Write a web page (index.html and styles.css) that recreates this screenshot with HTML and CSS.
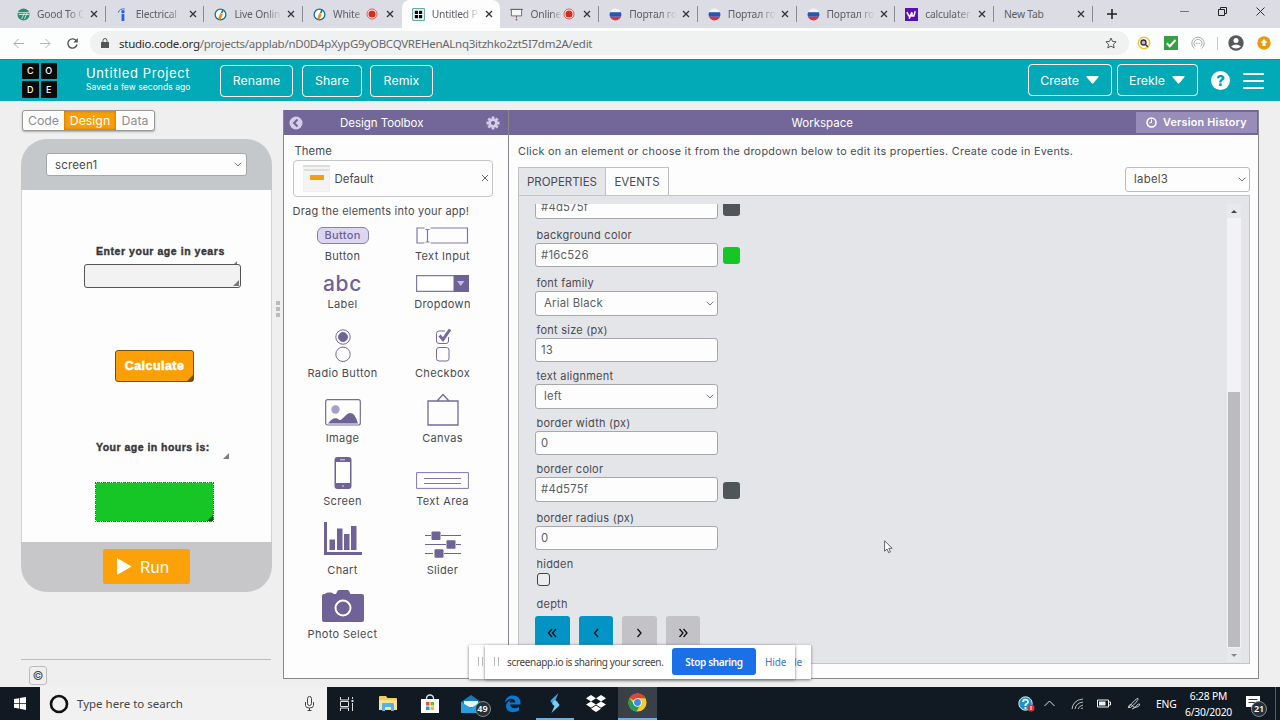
FILE: index.html
```
<!DOCTYPE html>
<html lang="en">
<head>
<meta charset="utf-8">
<title>Untitled Project - App Lab</title>
<link rel="stylesheet" href="styles.css">
</head>
<body>
<svg class="defs" width="0" height="0">
  <defs>
    <clipPath id="disc"><circle cx="7" cy="7" r="6.4"/></clipPath>
    <symbol id="flag" viewBox="0 0 14 14"><g clip-path="url(#disc)"><path fill="#f4f4fa" d="M0 0h14v4.500H0z"/><path fill="#2458b8" d="M0 4.500h14v5H0z"/><path fill="#df3045" d="M0 9.500h14V14H0z"/></g></symbol>
    <symbol id="live" viewBox="0 0 14 14"><circle cx="7" cy="7" r="5.800" fill="#fff" stroke="#147282" stroke-width="1.400"/><path d="M5 11.500 7 6l2 1-2.500 5z" fill="#ee8a1d" stroke="#ee8a1d"/><path d="m7.500 5 1.300-3 1.700.8L9 6z" fill="#147282"/></symbol>
    <symbol id="x" viewBox="0 0 8 8"><path d="m1 1 6 6M7 1 1 7" stroke="#333" stroke-width="1.300"/></symbol>
    <symbol id="rec" viewBox="0 0 12 12"><circle cx="6" cy="6" r="5" fill="#fff" stroke="#dc5247"/><circle cx="6" cy="6" r="3.600" fill="#d62b20"/></symbol>
    <symbol id="chev" viewBox="0 0 8 5"><path d="m.7.7 3.300 3.300L7.300.7" fill="none" stroke="#777"/></symbol>
    <symbol id="caret" viewBox="0 0 13 8"><path d="M1 0h11q1 0 .5 1L7.500 7q-1 1-2 0L.5 1Q0 0 1 0z" fill="#fff"/></symbol>
    <symbol id="corner" viewBox="0 0 6 6"><path d="M6 0v6H0z" fill="#000" fill-opacity=".5"/></symbol>
  </defs>
</svg>

<div class="tabs">
  <div class="tab"><svg class="fav" viewBox="0 0 14 14"><circle cx="7" cy="7" r="6.500" fill="#2d8b70"/><path d="M1 5h12M2 7h11M5 12l3-7M8 12l3-7" stroke="#cfe9df"/></svg><span class="tt">Good To C</span><svg class="cl"><use href="#x"/></svg></div>
  <div class="tab"><svg class="fav" viewBox="0 0 14 14"><circle cx="7.500" cy="4" r="1.900" fill="#2862d9"/><path d="M6 6.500h3V14H6z" fill="#2862d9"/><path d="M2.500 5Q4 0 9.500 1.200" fill="none" stroke="#2862d9"/></svg><span class="tt">Electrical</span><svg class="cl"><use href="#x"/></svg></div>
  <div class="tab"><svg class="fav"><use href="#live"/></svg><span class="tt">Live Onlin</span><svg class="cl"><use href="#x"/></svg></div>
  <div class="tab last"><svg class="fav"><use href="#live"/></svg><span class="tt short">White</span><svg class="rec"><use href="#rec"/></svg><svg class="cl"><use href="#x"/></svg></div>
  <div class="tab active"><svg class="fav" viewBox="0 0 14 14"><path d="M.7.700h12.600v12.600H.7z" fill="#fff" stroke="#3a9a8e"/><path d="M3 3h3.500v3.500H3zM7.500 3H11v3.500H7.500zM3 7.500h3.500V11H3zM7.500 7.500H11V11H7.500z"/></svg><span class="tt">Untitled P</span><svg class="cl"><use href="#x"/></svg></div>
  <div class="tab"><svg class="fav" viewBox="0 0 14 14"><path d="M1.500 1.500h11v7h-11zM0 1.500h14M7 8.500V11" fill="#f6f6f8" stroke="#666"/><circle cx="7" cy="12.500" r="1" fill="#d4375b"/></svg><span class="tt short">Online</span><svg class="rec"><use href="#rec"/></svg><svg class="cl"><use href="#x"/></svg></div>
  <div class="tab"><svg class="fav"><use href="#flag"/></svg><span class="tt">Портал го</span><svg class="cl"><use href="#x"/></svg></div>
  <div class="tab"><svg class="fav"><use href="#flag"/></svg><span class="tt">Портал го</span><svg class="cl"><use href="#x"/></svg></div>
  <div class="tab"><svg class="fav"><use href="#flag"/></svg><span class="tt">Портал го</span><svg class="cl"><use href="#x"/></svg></div>
  <div class="tab"><svg class="fav" viewBox="0 0 14 14"><path fill="#5a0fb8" d="M0 0h14v14H0z"/><path d="M2 4.500 4.500 9M7.500 4.500 4.500 11.500M7.500 5.500v3h2l1.500-5" stroke="#fff" stroke-width="1.700" fill="none"/></svg><span class="tt">calculater</span><svg class="cl"><use href="#x"/></svg></div>
  <div class="tab noicon"><span class="tt">New Tab</span><svg class="cl"><use href="#x"/></svg></div>
  <svg class="plus" viewBox="0 0 10 10"><path d="M5 0v10M0 5h10" stroke="#222" stroke-width="1.600"/></svg>
  <div class="winctl">
    <svg width="9" height="9"><path d="M0 4.500h9" stroke="#777"/></svg>
    <svg width="9" height="9" fill="none" stroke="#222"><path d="M.5 2.500h6v6h-6zM2.500 2.500v-2h6v6h-2"/></svg>
    <svg width="9" height="9"><path d="m.5.500 8 8M8.500.500l-8 8" stroke="#333"/></svg>
  </div>
</div>

<div class="toolbar">
  <svg class="nav" viewBox="0 0 11 11"><path d="M11 5.500H1M5.500 1 1 5.500 5.500 10" fill="none" stroke="#aaa"/></svg>
  <svg class="nav" viewBox="0 0 11 11"><path d="M0 5.500h10M5.500 1 10 5.500 5.500 10" fill="none" stroke="#b5b5b5"/></svg>
  <svg class="nav" viewBox="0 0 11 11"><path d="M9.500 3.200A4.600 4.600 0 1 0 10 6.500" fill="none" stroke="#555" stroke-width="1.400"/><path d="M10.800 0v4.500H6.300z" fill="#555"/></svg>
  <div class="omni">
    <svg width="8" height="10" viewBox="0 0 8 10"><path d="M0 4h8v6H0z" fill="#555"/><path d="M2 4V2.500a2 2 0 0 1 4 0V4" fill="none" stroke="#555"/></svg>
    <span class="url"><b>studio.code.org</b>/projects/applab/nD0D4pXypG9yOBCQVREHenALnq3itzhko2zt5I7dm2A/edit</span>
    <svg class="star" viewBox="0 0 12 12"><path d="m6 1 1.500 3.400 3.600.4-2.700 2.500.8 3.600L6 9.100 2.800 10.900l.8-3.600L.9 4.800l3.600-.4z" fill="none" stroke="#555"/></svg>
  </div>
  <div class="exts">
    <svg viewBox="0 0 14 14"><circle cx="7" cy="7" r="5.700" fill="#fff" stroke="#f2c53d" stroke-width="1.500"/><circle cx="6.500" cy="6.500" r="2.500" fill="#bbb" stroke="#333" stroke-width="1.300"/><path d="m8.300 8.300 2.500 2.500" stroke="#333" stroke-width="1.500"/></svg>
    <svg viewBox="0 0 14 14"><path d="M0 0h14v14H0z" fill="#35a043"/><path d="m2.800 7.200 3 3L11.500 4" fill="none" stroke="#fff" stroke-width="2"/></svg>
    <svg viewBox="0 0 14 14"><path d="M3.500 12.500a6.200 6.200 0 1 1 7 0M4.500 10.500a4 4 0 1 1 5 0" fill="none" stroke="#aaa"/><path d="M4.800 7.300h4.400" stroke="#999" stroke-dasharray="1 .7"/></svg>
    <i></i>
    <svg class="user" viewBox="0 0 16 16"><circle cx="8" cy="8" r="7.700" fill="#56595d"/><circle cx="8" cy="5.500" r="2.500" fill="#fff"/><path d="M3 11.500q5-4 10 0-5 4-10 0" fill="#fff"/></svg>
    <svg viewBox="0 0 14 14"><circle cx="7" cy="7" r="6.700" fill="#ea9a0c"/><path d="m7 3 3.500 3.700H8.500V10h-3V6.700h-2z" fill="#fff"/></svg>
  </div>
</div>

<header class="head">
  <div class="logo"><span>C</span><span>O</span><span>D</span><span>E</span></div>
  <div class="proj"><div class="pname">Untitled Project</div><div class="saved">Saved a few seconds ago</div></div>
  <div class="hb rename">Rename</div><div class="hb share">Share</div><div class="hb remix">Remix</div>
  <div class="hb create">Create <svg class="caret"><use href="#caret"/></svg></div>
  <div class="hb erekle">Erekle <svg class="caret"><use href="#caret"/></svg></div>
  <div class="help">?</div>
  <div class="burger"><i></i><i></i><i></i></div>
</header>

<main class="main">
  <section class="left">
    <div class="modes"><span>Code</span><span class="on">Design</span><span>Data</span></div>
    <div class="phone">
      <div class="ptop"><div class="psel"><span>screen1</span><svg class="chev"><use href="#chev"/></svg></div></div>
      <div class="screen">
        <div class="l1">Enter your age in years</div>
        <div class="inp"><svg class="c0"><use href="#corner"/></svg><svg class="c"><use href="#corner"/></svg></div>
        <div class="calc">Calculate<svg class="c"><use href="#corner"/></svg></div>
        <div class="l2"><span>Your age in hours is:</span><svg class="c"><use href="#corner"/></svg></div>
        <div class="green"><svg class="c"><use href="#corner"/></svg></div>
      </div>
      <div class="pbot"><div class="run"><svg width="16" height="18" viewBox="0 0 16 18"><path d="M0 0v18l15.500-9z" fill="#fff"/></svg><span>Run</span></div></div>
    </div>
    <div class="foot"><span>©</span></div>
  </section>
  <div class="grip"><i></i><i></i><i></i></div>

  <section class="work">
    <div class="box">
      <div class="bar">
        <svg width="14" height="14" viewBox="0 0 14 14"><circle cx="7" cy="7" r="6.500" fill="#d4cdea"/><path d="M8.500 3.500 5 7l3.500 3.500" fill="none" stroke="#6e6296" stroke-width="2"/></svg>
        <span class="t">Design Toolbox</span>
        <svg class="gear" width="14" height="14" viewBox="-7 -7 14 14"><g stroke="#d4cdea" stroke-width="2.800"><path d="M0-6.500v13M-6.500 0h13M-4.600-4.600l9.200 9.200M4.600-4.600l-9.200 9.200"/></g><circle r="4.600" fill="#d4cdea"/><circle r="2" fill="#6e6296"/></svg>
      </div>
      <div class="boxbody">
        <div class="theme">Theme</div>
        <div class="tsel"><div class="thumb"><i></i></div><span>Default</span><svg class="tx" viewBox="0 0 8 8"><path d="m1 1 6 6M7 1 1 7" stroke="#666"/></svg></div>
        <div class="drag">Drag the elements into your app!</div>
        <div class="tools">
          <div class="tool"><div class="bicon">Button</div><span>Button</span></div>
          <div class="tool"><svg width="53" height="17" fill="none" stroke="#8177aa" stroke-width="1.200"><path d="M8.500 1H1v15h7.500M14.500 1h37v15h-37M9.500 2.500h4M9.500 15h4M11.500 2.500V15"/></svg><span>Text Input</span></div>
          <div class="tool"><div class="abc">abc</div><span>Label</span></div>
          <div class="tool"><svg width="53" height="17"><path d="M.6.600h51.800v15.800H.6z" fill="#fff" stroke="#8177aa" stroke-width="1.200"/><path d="M37.500 0H53v17H37.500z" fill="#6e6296"/><path d="M41 6h7.500l-3.800 5z" fill="#c6badf"/></svg><span>Dropdown</span></div>
          <div class="tool r"><svg width="16" height="33" fill="none" stroke="#756a9d"><circle cx="8" cy="8" r="7.200"/><circle cx="8" cy="8" r="4.500" fill="#6e6296"/><circle cx="8" cy="25.300" r="7.200"/></svg><span>Radio Button</span></div>
          <div class="tool r"><svg width="18" height="34" fill="none" stroke="#756a9d"><path d="M14.500 9v4q0 2.500-2.500 2.500H5Q2.500 15.500 2.500 13V5.500Q2.500 3 5 3h6"/><rect x="2.500" y="19.500" width="12.500" height="13.500" rx="2.500"/><path d="m5.500 7.500 3.500 4L16 1.500" stroke-width="3"/></svg><span>Checkbox</span></div>
          <div class="tool"><svg width="36" height="27"><rect x=".7" y=".7" width="34.600" height="25.300" rx="2" fill="#fff" stroke="#756a9d" stroke-width="1.200"/><circle cx="10.500" cy="10.500" r="4.200" fill="#a89dca"/><path d="M3 24.500C7 19 11 18 14.500 21c3 1 5-6 10.500-7 4 0 6 4 8 10.500z" fill="#6e6296"/></svg><span>Image</span></div>
          <div class="tool"><svg width="32" height="33" fill="none" stroke="#756a9d" stroke-width="1.300"><path d="M1 8h30v24H1zM10 8l6-6.500L22 8"/></svg><span>Canvas</span></div>
          <div class="tool"><svg width="18" height="32"><rect width="17" height="32" x=".5" rx="3" fill="#6e6296"/><path d="M2 5h14v21H2z" fill="#fff"/><path d="M6 2.800h5M8 29h2" stroke="#ddd"/></svg><span>Screen</span></div>
          <div class="tool"><svg width="53" height="17" fill="none" stroke="#8177aa"><path d="M.6.600h51.800v15.800H.6z"/><path d="M8 6.500h37M8 11.500h37"/></svg><span>Text Area</span></div>
          <div class="tool k"><svg width="38" height="33" fill="#6e6296"><path d="M0 0h3v30h35v3H0zM5.500 17.500h5.500v10.500H5.500zM13 6.500h5.500V28H13zM20 12h5.500v16H20zM27 4h5.500v24H27z"/></svg><span>Chart</span></div>
          <div class="tool"><svg width="36" height="27" fill="#6e6296" stroke="#6e6296"><path d="M0 4.500h6M16 4.500h20M0 13.500h21M31 13.500h5M0 22.500h8M19 22.500h17"/><rect x="6.500" y=".5" width="9" height="8.500" rx="1" stroke-width="0"/><rect x="21.500" y="9.300" width="9" height="8.500" rx="1" stroke-width="0"/><rect x="9.500" y="18.300" width="9" height="8.500" rx="1" stroke-width="0"/></svg><span>Slider</span></div>
          <div class="tool"><svg width="42" height="32"><path d="M2 4h1q1-1.500 3-1.500h3Q11 2.500 11.500 4H14l1.500-3Q16 0 17 0h8q1.500 0 2 1l1.500 3H40q2 0 2 2v24q0 2-2 2H2q-2 0-2-2V6q0-2 2-2z" fill="#6e6296"/><circle cx="21" cy="18" r="7.500" fill="none" stroke="#fff" stroke-width="2"/></svg><span>Photo Select</span></div>
        </div>
      </div>
    </div>

    <div class="pane">
      <div class="bar"><span class="wt">Workspace</span><div class="vh"><svg width="11" height="11" viewBox="0 0 11 11"><circle cx="5.500" cy="5.500" r="4.500" fill="none" stroke="#fff" stroke-width="1.500"/><path d="M5.500 2.500v3.200H3.500" fill="none" stroke="#fff"/></svg><span>Version History</span></div></div>
      <div class="panebody">
        <div class="hint">Click on an element or choose it from the dropdown below to edit its properties. Create code in Events.</div>
        <div class="ptabs"><span class="pt on">PROPERTIES</span><span class="pt ev">EVENTS</span><div class="lsel"><span>label3</span><svg class="chev"><use href="#chev"/></svg></div></div>
        <div class="panel">
          <div class="view">
            <div class="fields">
              <div class="first"><div class="fi">#4d575f</div><i class="sw dk"></i></div>
              <div class="fl">background color</div><div class="row c8"><div class="fi">#16c526</div><i class="sw gr"></i></div>
              <div class="fl">font family</div><div class="row"><div class="fi s"><span>Arial Black</span><svg class="chev"><use href="#chev"/></svg></div></div>
              <div class="fl">font size (px)</div><div class="row"><div class="fi">13</div></div>
              <div class="fl">text alignment</div><div class="row"><div class="fi s"><span>left</span><svg class="chev"><use href="#chev"/></svg></div></div>
              <div class="fl">border width (px)</div><div class="row"><div class="fi">0</div></div>
              <div class="fl">border color</div><div class="row c8"><div class="fi">#4d575f</div><i class="sw dk"></i></div>
              <div class="fl">border radius (px)</div><div class="row"><div class="fi">0</div></div>
              <div class="fl">hidden</div><div class="check"></div>
              <div class="fl">depth</div>
              <div class="depth">
                <span class="d a"><svg viewBox="0 0 10 10"><path d="M5 1 1.500 5 5 9M9 1 5.500 5 9 9"/></svg></span>
                <span class="d a"><svg viewBox="0 0 10 10"><path d="M7 1 3.500 5 7 9"/></svg></span>
                <span class="d"><svg viewBox="0 0 10 10"><path d="m3.500 1 3.500 4-3.500 4"/></svg></span>
                <span class="d"><svg viewBox="0 0 10 10"><path d="m1.500 1 3.500 4-3.500 4M5.500 1 9 5 5.500 9"/></svg></span>
              </div>
            </div>
            <div class="scroll"><svg width="14" height="14"><path d="M4 9h6L7 6z" fill="#444"/></svg><div class="track"><i></i></div><svg width="14" height="14"><path d="M4 6h6L7 9z" fill="#888"/></svg></div>
          </div>
        </div>
      </div>
    </div>
  </section>
</main>

<div class="sharebar back"><i class="bars"></i><span class="hide">de</span></div>
<div class="sharebar front"><i class="bars"></i><span class="msg">screenapp.io is sharing your screen.</span><span class="stop">Stop sharing</span><span class="hide">Hide</span></div>
<svg class="cursor" viewBox="0 0 9 14"><path d="M.6.800v10.400L3 9l1.700 3.700 1.700-.8L4.800 8.300h3.300z" fill="#fff" stroke="#555" stroke-width=".9"/></svg>

<footer class="task">
  <div class="start"><svg width="12" height="13" viewBox="0 0 12 13" fill="#fff"><path d="M0 2l5-.8V6H0zM5.700 1 12 0v6H5.700zM0 6.700h5v4.800l-5-.8zM5.700 6.700H12V13l-6.300-1.200z"/></svg></div>
  <div class="search"><svg width="20" height="20" viewBox="0 0 20 20"><circle cx="10" cy="10" r="8" fill="none" stroke="#111" stroke-width="2.600"/></svg><span>Type here to search</span><svg class="mic" width="9" height="15" viewBox="0 0 9 15" fill="none" stroke="#444"><rect x="2.500" y=".5" width="4" height="9" rx="2"/><path d="M.5 6v3.500Q.5 12 4.500 12t4-2.500V6M4.500 12v2.500M2.500 14.500h4"/></svg></div>
  <div class="apps">
    <div><svg width="16" height="16" viewBox="0 0 16 16" fill="none" stroke="#ddd"><path d="M1.500 1v3h8V1M1.500 15v-3h8v3M1.500 5.500h8v5h-8zM13.500 1v2M13.500 7v8"/><path d="M12.500 5h2" stroke-width="2"/></svg></div>
    <div><svg width="18" height="17" viewBox="0 0 18 17"><path d="M0 2q0-1 1-1h6l1.500 2H17q1 0 1 1v11H0z" fill="#f3cc60"/><path d="M0 5h18v10H0z" fill="#fbe191"/><path d="M3 9q0-1 1-1h10q1 0 1 1v7h-3v-4H6v4H3z" fill="#56b2e4"/></svg></div>
    <div><svg width="18" height="20" viewBox="0 0 18 20"><path d="M5.500 5.500V4Q6 1 9 1t3.500 3v1.500" fill="none" stroke="#ddd" stroke-width="1.300"/><path d="M0 5h18v14H0z" fill="#fff"/><path d="M5 8h3.500v3.500H5z" fill="#e6502a"/><path d="M9.500 8H13v3.500H9.500z" fill="#7bb62d"/><path d="M5 12.500h3.500V16H5z" fill="#1b9ddb"/><path d="M9.500 12.500H13V16H9.500z" fill="#f5b722"/></svg></div>
    <div class="mail"><svg width="20" height="18" viewBox="0 0 20 18"><path d="M0 7l10-7 10 7v11H0z" fill="#1778b5"/><path d="M3 6h14v6H3z" fill="#e4f4fb"/><path d="m0 7 10 6 10-6v11H0z" fill="#28a0dc"/></svg><b>49</b></div>
    <div><svg width="17" height="18" viewBox="0 0 17 18"><path d="M1 8C1 3 4.500.500 9 .500c5 0 8 3.500 7.500 9H6c0 3.500 5 5 9 2.500v3.500C9 19 2 17 2 11c0-3 2-5 5-6-1 1-1.300 2-1.200 2.500h5.500C11 2 4 3 1 8z" fill="#0879d2"/></svg></div>
    <div class="run1"><svg width="12" height="20" viewBox="0 0 12 20"><path d="M9.500 0 2 7q-1 1 0 2l4.500 4 2.500-4-2.500-2z" fill="#39a6e9"/><path d="m2.500 20 7.500-7q1-1 0-2L5.500 7 3 11l2.500 2z" fill="#78cdf6"/></svg></div>
    <div><svg width="20" height="17" viewBox="0 0 20 17" fill="#fff"><path d="m5 0 5 3.200-5 3.200L0 3.200zM15 0l5 3.200-5 3.200-5-3.200zM5 6.400l5 3.200-5 3.200-5-3.200zM15 6.400l5 3.200-5 3.200-5-3.200zM10 10.600l5 3.200-5 3.200-5-3.200z"/></svg></div>
    <div class="run2"><svg width="19" height="19" viewBox="0 0 20 20"><circle cx="10" cy="10" r="9.500" fill="#f6c92c"/><path d="M10 10 1.800 5.200A9.500 9.500 0 0 1 18.400 5.500H10z" fill="#dc4437"/><path d="M1.800 5.200A9.500 9.500 0 0 0 9 19.500l4-7.500-7-.5z" fill="#229e58"/><circle cx="10" cy="10" r="4.600" fill="#fff"/><circle cx="10" cy="10" r="3.600" fill="#4386ed"/></svg></div>
  </div>
  <div class="tray">
    <svg class="q" width="17" height="16" viewBox="0 0 17 16"><circle cx="7.500" cy="7.500" r="6.700" fill="#1d95c6" stroke="#dfeff5"/><path d="M5 6q0-2.500 2.500-2.500T10 6q0 1.500-2.500 2.500V10M7.500 11v2" fill="none" stroke="#fff" stroke-width="1.700"/><circle cx="13" cy="12" r="3.500" fill="#dc343c"/><path d="M13 10v4" stroke="#fff"/></svg>
    <svg class="up" width="11" height="7"><path d="m.5 6 5-5 5 5" fill="none" stroke="#ddd"/></svg>
    <svg class="wifi" width="13" height="12" viewBox="0 0 13 12" fill="none" stroke="#bbb"><path d="M1 11Q2 2 12 1M4 11q1-6 8-7M7 11q1-3 5-4M10 11q0-1 2-1"/></svg>
    <svg class="bat" width="14" height="9"><path d="M.5 1h11v7H.5zM12 3h1.500v3H12" fill="none" stroke="#eee"/><path d="M2 2.500h6.500v4H2z" fill="#eee"/></svg>
    <svg class="pen" width="14" height="13" fill="none" stroke="#ccc"><path d="M1 11Q9 1 11 1.500q1 1-5 7-3 3-4.500 2 0-3 3-3 3 5 5 1 2-2 3-1.500 1 1-1.500 2.500Q8 10.500 5 12"/></svg>
    <span class="eng">ENG</span>
    <div class="clock"><span>6:28 PM</span><span>6/30/2020</span></div>
    <div class="note"><svg width="14" height="14"><path d="M0 0h14v11H8l-3 3v-3H0z" fill="#fff"/><path d="M2.500 3.500h9M2.500 6.500h9" stroke="#333"/></svg><b>21</b></div>
    <i class="peek"></i>
  </div>
</footer>
</body>
</html>
```
FILE: styles.css
```
* { box-sizing: border-box; }
body { margin: 0; width: 1280px; height: 720px; overflow: hidden; display: flex; flex-direction: column; background: #efeff0; font-family: Inter, "Noto Sans", sans-serif; font-size: 11px; color: #4b4b50; white-space: nowrap; position: relative; }
svg { display: block; flex: none; }
.defs { position: absolute; }
i, b { font-style: normal; }

.tabs { height: 28px; flex: none; background: #dcdde4; display: flex; padding-left: 7px; align-items: flex-end; font-family: "Noto Sans", sans-serif; font-size: 10.3px; letter-spacing: -.2px; color: #5c5d63; }
.tab { width: 98.700px; height: 28px; flex: none; display: flex; align-items: center; padding-left: 10px; position: relative; }
.tab::after { content: ""; position: absolute; right: 0; top: 6px; height: 16px; width: 1px; background: #888b93; }
.tab.last::after, .tab.active::after { display: none; }
.tab.active { background: #fdfdfe; border-radius: 8px 8px 0 0; }
.fav { width: 13px; height: 13px; margin-right: 7px; }
.tt { width: 48px; line-height: 16px; -webkit-mask-image: linear-gradient(90deg, #000 65%, transparent); }
.tt.short { width: 32px; }
.noicon .tt { width: 68px; -webkit-mask-image: none; }
.rec { width: 12px; height: 12px; margin: 0 -1px 0 1px; }
.cl { width: 8px; height: 8px; margin-left: 5px; }
.short ~ .cl { margin-left: 9px; }
.plus { width: 10px; height: 10px; margin: 0 0 9px 14px; }
.winctl { display: flex; gap: 29px; margin: 0 15px 12px auto; }

.toolbar { height: 31px; flex: none; display: flex; align-items: center; background: #fcfdfd; padding: 0 0 1px 13px; font-family: "Noto Sans", sans-serif; font-size: 11.500px; color: #66696c; }
.nav { width: 11px; height: 11px; margin-right: 16px; }
.omni { margin-left: -4px; width: 1039px; height: 24px; border-radius: 12px; background: #f0f2f2; display: flex; align-items: center; padding: 0 12px 0 11px; }
.url { margin-left: 10px; letter-spacing: -.26px; }
.url b { font-weight: 400; color: #2b2b2e; }
.star { width: 12px; height: 12px; margin-left: auto; }
.exts { display: flex; align-items: center; gap: 13px; margin-left: 8px; }
.exts svg { width: 14px; height: 14px; }
.exts i { width: 1px; height: 13px; background: #c8c8c8; margin: 0 -3px 0 -1px; }
.exts .user { width: 16px; height: 16px; }

.head { height: 42px; flex: none; background: #02a9b7; color: #fff; display: flex; align-items: center; padding-left: 22px; border-top: 1px solid #0b98a5; }
.logo { width: 35px; height: 35px; display: grid; grid-template-columns: 1fr 1fr; gap: 2px; margin-top: -1px; }
.logo span { background: #0a0a0a; display: flex; align-items: center; justify-content: center; font-weight: 500; font-size: 9px; border-radius: 1px; }
.proj { margin-left: 29px; width: 134px; margin-top: -3px; }
.pname { font-size: 13px; line-height: 16px; letter-spacing: .6px; }
.saved { font-size: 8.500px; line-height: 13px; letter-spacing: .06px; }
.hb { height: 32px; border: 1.500px solid #fff; border-radius: 4px; display: flex; align-items: center; justify-content: center; font-size: 12.300px; letter-spacing: .1px; }
.rename { width: 73px; margin-right: 9px; } .share { width: 60px; margin-right: 8px; } .remix { width: 63px; margin-right: 595px; }
.create { width: 84px; margin-right: 5px; margin-top: -1px; } .erekle { width: 81px; margin-top: -1px; }
.create, .erekle { letter-spacing: 0; padding-right: 1px; }
.caret { width: 13px; height: 8px; margin-left: 7px; }
.help { width: 19px; height: 19px; border-radius: 50%; background: #fff; color: #02a0af; font-weight: 800; font-size: 15px; display: flex; align-items: center; justify-content: center; margin-left: 13px; }
.burger { margin-left: 13px; display: flex; flex-direction: column; gap: 5px; }
.burger i { width: 21px; height: 2px; background: #fff; border-radius: 1px; }

.main { height: 586px; flex: none; display: flex; }
.left { width: 251px; margin-left: 21px; display: flex; flex-direction: column; padding-top: 9px; }
.modes { display: flex; width: 133px; height: 21px; border: 1px solid #999; border-radius: 3px; background: #fdfdfe; box-shadow: 0 1px 2px #aaa; font-size: 12.300px; color: #8d8d90; flex: none; margin-left: 1px; }
.modes span { display: flex; align-items: center; justify-content: center; width: 41px; }
.modes .on { background: #f79e08; color: #fff; width: 52px; box-shadow: inset 0 0 3px #ad6c00; }
.modes span:last-child { width: 38px; }
.phone { margin-top: 8px; height: 453px; display: flex; flex-direction: column; flex: none; }
.ptop { height: 51px; background: #c4c8ca; border-radius: 26px 26px 0 0; padding: 14px 0 0 25px; }
.psel { width: 201px; height: 23px; background: #fdfdfe; border: 1px solid #a4a7a9; border-radius: 3px; display: flex; align-items: center; justify-content: space-between; padding: 0 4px 0 8px; font-size: 11.500px; letter-spacing: .15px; }
.chev { width: 8px; height: 5px; }
.screen { height: 352px; background: #fdfdfe; border: solid #d2d2d4; border-width: 0 1px; font-family: "Liberation Sans", Arial, sans-serif; font-weight: 700; font-size: 10.500px; color: #38383c; padding-left: 62px; display: flex; flex-direction: column; align-items: flex-start; }
.l1, .l2 { letter-spacing: .55px; -webkit-text-stroke: .4px currentColor; }
.l1 { margin: 55px 0 0 12px; line-height: 13px; height: 13px; }
.l2 span { letter-spacing: .48px; }
.c { position: absolute; right: 1px; bottom: 1px; width: 6px; height: 6px; }
.c0 { position: absolute; right: 3px; top: -4px; width: 3px; height: 3px; }
.inp { position: relative; margin-top: 6px; width: 157px; height: 24px; border: 1px solid #555; border-radius: 3px; background: #f2f2f3; }
.calc { position: relative; margin: 62px 0 0 31px; width: 79px; height: 32px; background: #fc9f05; border: 1px solid #6d5320; border-radius: 3px; color: #fff; display: flex; align-items: center; justify-content: center; font-size: 12.500px; letter-spacing: .45px; -webkit-text-stroke: .5px #fff; }
.calc .c, .green .c { right: 0; bottom: 0; }
.l2 { position: relative; margin: 59px 0 0 12px; width: 134px; height: 19px; line-height: 13px; }
.green { position: relative; margin: 22px 0 0 11px; width: 119px; height: 40px; background: #16c526; border: 1px dashed #f1fff2; outline: 1px dotted #267a30; outline-offset: -1px; }
.pbot { height: 50px; background: #c7c7ca; border-radius: 0 0 26px 26px; padding: 7px 0 0 82px; }
.run { width: 87px; height: 35px; background: #fca208; border-radius: 2px; color: #fff; display: flex; align-items: center; padding-left: 14px; gap: 8px; font-size: 16px; }
.run svg { width: 15px; height: 19px; }
.foot { margin-top: 67px; border-top: 1px solid #bbb; padding: 6px 0 0 8px; width: 250px; }
.foot span { width: 18px; height: 19px; border: 1px solid #bbb; border-radius: 3px; display: flex; align-items: center; justify-content: center; font-size: 12px; }
.grip { width: 11px; padding: 200px 0 0 4px; display: flex; flex-direction: column; gap: 2px; }
.grip i { width: 4px; height: 4px; background: #bbb; }

.work { margin-top: 9px; width: 976px; height: 569px; border: 1px solid #87878c; border-top: 0; display: flex; background: #fdfdfe; }
.bar { height: 25px; background: #736799; color: #fff; display: flex; align-items: center; font-size: 11.500px; }
.box { width: 225px; border-right: 1px solid #88858f; }
.box .bar { padding: 0 8px 0 5px; }
.t { width: 84px; margin-left: 37px; letter-spacing: -.04px; }
.gear { margin-left: auto; }
.boxbody { padding-left: 8.500px; }
.theme { margin: 8px 0 0 2px; line-height: 16px; height: 17px; font-size: 11.300px; letter-spacing: .05px; }
.tsel { width: 200px; height: 37px; border: 1px solid #c6c6ca; border-radius: 4px; display: flex; align-items: center; padding: 0 3px 0 9px; font-size: 11.500px; letter-spacing: 0; }
.thumb { width: 27px; height: 27px; background: #f3f3f3; border: 1px solid #eee; border-top: 6px double #ddd; padding: 4px 0 0 6px; margin-right: 5px; }
.thumb i { display: block; width: 14px; height: 5px; background: #eea016; }
.tx { width: 8px; height: 8px; margin: -2px 0 0 auto; }
.drag { margin-top: 6px; height: 17px; line-height: 17px; letter-spacing: .22px; font-size: 11px; }
.tools { display: grid; grid-template-columns: 100px 100px; grid-template-rows: 45px 48px 69px 65px 63px 69px 64px; }
.tool { display: flex; flex-direction: column; align-items: center; justify-content: flex-end; font-size: 11px; letter-spacing: .34px; }
.tool > span { line-height: 18px; height: 18px; margin-top: 3px; }
.tool.r > span { margin-top: 2px; } .tool.k > span { margin-top: 6px; }
.bicon { width: 52px; height: 17px; border: 1px solid #8a80ad; border-radius: 6px; background: #dcd6f0; color: #6e6296; font-weight: 500; text-align: center; line-height: 15px; }
.abc { color: #6e6296; font-size: 21px; font-weight: 500; line-height: 26px; height: 21px; letter-spacing: .7px; }

.pane { flex: 1; }
.pane .bar { justify-content: flex-end; }
.wt { margin-right: 283px; }
.pane .bar .vh { width: 121px; margin-right: 1px; height: 21px; background: #978db8; display: flex; align-items: center; padding-left: 10px; gap: 6px; font-weight: 600; font-size: 10.800px; letter-spacing: .22px; }
.panebody { padding-left: 9px; }
.hint { height: 32px; padding-top: 8px; line-height: 17px; font-size: 10.800px; letter-spacing: .3px; }
.ptabs { display: flex; height: 28px; font-size: 11.500px; }
.pt { width: 88px; border: 1px solid #bfc0c4; border-bottom: 0; background: #e5e6ea; display: flex; align-items: center; justify-content: center; }
.pt.ev { width: 63px; background: #fdfdfe; border-left: 0; }
.lsel { width: 125px; height: 25px; margin-left: 456px; border: 1px solid #bbbcc0; border-radius: 3px; display: flex; align-items: center; justify-content: space-between; padding: 0 3px 1px 8px; font-size: 11.300px; letter-spacing: .3px; background: #fdfdfe; }
.panel { width: 732px; height: 469px; background: #e4e5e9; border: 1px solid #c3c4c8; padding: 8px 8px 0 16px; position: relative; }
.view { height: 458px; overflow: hidden; display: flex; justify-content: space-between; }
.fields { font-size: 11px; letter-spacing: .24px; }
.fl { height: 16px; line-height: 16px; padding-left: 1.500px; }
.row, .first { display: flex; margin-bottom: 6px; }
.c8 { margin-bottom: 8px; }
.first { margin: -9.500px 0 7.500px; }
.fi { width: 183px; height: 24.500px; border: 1px solid #a7a8ac; border-radius: 3px; background: #fdfdfe; padding-left: 5px; display: flex; align-items: center; font-size: 11.300px; color: #5b5e63; }
.fi.s { padding: 0 3px 0 8px; justify-content: space-between; }
.sw { width: 17px; height: 17px; border-radius: 3px; margin: 4.500px 0 0 5px; }
.dk { background: #4f5558; } .gr { background: #16c526; }
.check { width: 13px; height: 13px; border: 1.500px solid #444; border-radius: 3px; margin: 1px 0 10px 1.500px; background: #eceded; }
.depth { display: flex; gap: 9px; margin-top: 4px; }
.d { width: 34.500px; height: 34px; border-radius: 3px; background: #c3c3c7; display: flex; align-items: center; justify-content: center; }
.d.a { background: #0393c4; }
.d svg { width: 10px; height: 10px; fill: none; stroke: #111; stroke-width: 1.300; }
.scroll { width: 14px; background: #e8e9ec; height: 458px; display: flex; flex-direction: column; }
.track { height: 430px; padding-top: 174px; background: #f3f3f5; }
.track i { display: block; height: 255px; margin: 0 1px; background: #bcbcc0; }

.sharebar { position: absolute; top: 645px; height: 34px; background: #fff; box-shadow: 0 1px 3px #777; display: flex; align-items: center; font-family: "Noto Sans", sans-serif; font-size: 10px; letter-spacing: -.1px; color: #444; padding-bottom: 1px; }
.back { left: 469px; width: 342px; padding-left: 9px; }
.front { left: 485px; width: 310px; padding-left: 9px; }
.bars { width: 5px; height: 9px; border: solid #bbb; border-width: 0 1px; }
.msg { margin-left: 8px; width: 157px; letter-spacing: -.34px; }
.stop { margin-left: 8px; width: 84px; height: 27px; background: #1a70e6; border-radius: 3px; color: #fff; font-weight: 600; letter-spacing: -.35px; display: flex; align-items: center; justify-content: center; }
.hide { color: #3977d0; margin-left: 9px; }
.back .hide { margin-left: auto; padding-right: 9px; }
.cursor { position: absolute; left: 884px; top: 540px; width: 9px; height: 14px; }

.task { height: 33px; flex: none; background: #111a22; display: flex; font-family: "Noto Sans", sans-serif; color: #fff; }
.start { width: 40px; padding: 10px 0 0 14px; }
.search { width: 287px; background: #f1f1f2; color: #444; display: flex; align-items: center; padding: 0 13px 0 9px; font-size: 11.500px; gap: 8px; }
.mic { margin-left: auto; }
.apps { display: flex; margin-left: -1px; }
.apps div { width: 41.500px; height: 33px; display: flex; align-items: center; justify-content: center; position: relative; }
.apps b, .note b { position: absolute; width: 16px; height: 16px; border-radius: 50%; border: 1px solid #888; background: #263039; font-size: 9px; line-height: 14px; text-align: center; font-weight: 600; }
.apps b { left: 24px; top: 14px; }
.apps .run1 { border-bottom: 2px solid #6eaee0; width: 38px; margin: 0 2px; }
.apps .run2 { border-bottom: 2px solid #6eaee0; background: #394047; width: 39px; margin-left: 1px; }
.tray { margin-left: auto; display: flex; align-items: center; font-size: 10.300px; letter-spacing: -.2px; }
.up { margin-left: 9px; } .wifi { margin-left: 16px; } .bat { margin-left: 13px; } .pen { margin-left: 16px; } .eng { margin-left: 15px; width: 19px; }
.clock { width: 49px; margin-left: 9px; display: flex; flex-direction: column; align-items: center; line-height: 16px; }
.note { position: relative; width: 22px; margin-left: 13px; height: 33px; padding-top: 9px; }
.note b { left: 5px; top: 14px; }
.peek { width: 1px; height: 33px; background: #555b61; margin: 0 4px 0 7px; }
```
